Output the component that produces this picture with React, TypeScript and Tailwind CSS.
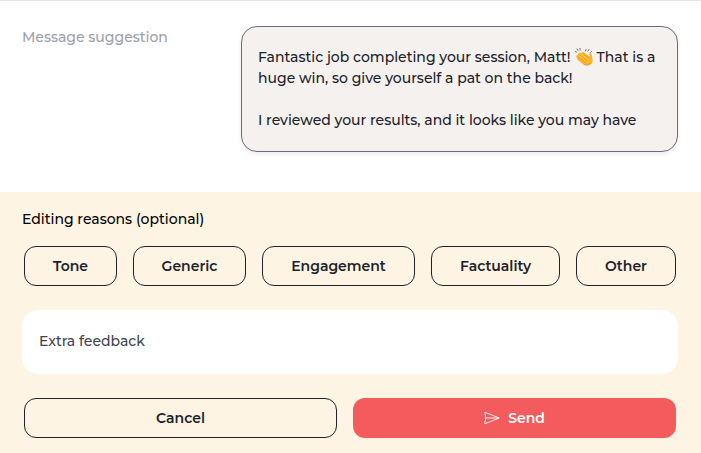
function ClappingHands() {
  return (
    <svg viewBox="0 0 36 36" className="mr-1 mb-[2px] ml-1 h-[18px] w-[18px] shrink-0" aria-label="clapping hands">
      <path d="M3 19 Q1 15 5 14 L6 14 Q5 10 9 10 L13 10 Q13 7 17 8 L29 17 L29 11 Q31 8 33 12 L35.500 25 Q35 32 29 34 Q22 37 16 32 L5 24 Q3 21 5 20 Z" fill="#fbb62c" />
      <path d="M10 14 L24 25 M6 18 L21 29 M17 12 L28 21 M18 33 Q25 36 31 31" stroke="#de8c22" strokeWidth="1.2" strokeLinecap="round" fill="none" />
      <path d="M12 12 L27 23 M8 15 L22 27" stroke="#ffd45c" strokeWidth="1.6" strokeLinecap="round" fill="none" />
      <path d="M1 7 L3 8 M4 2 L6 5 M10 1 L10 4 M22 3 L21 6 M28 3 L26 6 M33 7 L31 9" stroke="#6a6d72" strokeWidth="2" strokeLinecap="round" />
    </svg>
  );
}

function SendIcon() {
  return (
    <svg viewBox="0 0 16 14" className="h-[14px] w-4" fill="none" stroke="currentColor" strokeWidth="0.9" strokeLinejoin="round">
      <path d="M.8 1.2 15.2 7 .8 12.8 1.800 7Z M1.800 7H15" />
    </svg>
  );
}

const reasons = [
  { label: "Tone", box: "w-[93px]" },
  { label: "Generic", box: "w-[113px]" },
  { label: "Engagement", box: "w-[153px]" },
  { label: "Factuality", box: "w-[129px]" },
  { label: "Other", box: "w-[100px]" },
];

export default function App() {
  return (
    <main className="flex h-[453px] w-[701px] flex-col overflow-hidden bg-white font-[Montserrat,Inter,sans-serif] text-sm leading-[21px] font-medium text-[#20222b]">
      <section className="flex h-48 items-start justify-between border-t border-[#e1e4ef] pt-[25px] pr-[23px] pl-[22px]">
        <h2 className="pt-px font-medium text-[#9ca0ad]">Message suggestion</h2>
        <div className="h-[126px] w-[437px] rounded-2xl border border-[#6c6d7c] bg-[#f5f1ee] px-4 pt-5 whitespace-nowrap shadow-[0_2px_5px_rgba(0,0,0,0.08)]">
          <div className="flex h-[21px] items-center">
            <span>Fantastic job completing your session, Matt!</span>
            <ClappingHands />
            <span>That is a</span>
          </div>
          <div>huge win, so give yourself a pat on the back!</div>
          <div className="mt-[21px]">I reviewed your results, and it looks like you may have</div>
        </div>
      </section>
      <section className="flex h-[261px] flex-col bg-[#fdf4e3] px-[22px] pt-[17px]">
        <h3 className="font-medium text-black">Editing reasons (optional)</h3>
        <div className="mt-4 flex gap-4 pl-[2px]">
          {reasons.map((reason) => (
            <button key={reason.label} className={`h-10 shrink-0 rounded-xl border border-[#20222b] font-semibold ${reason.box}`}>
              {reason.label}
            </button>
          ))}
        </div>
        <div className="mt-6 flex h-16 w-[656px] items-center rounded-2xl bg-white px-[17px] pb-px text-[#414450]">Extra feedback</div>
        <div className="mt-6 flex gap-4 pl-[2px]">
          <button className="h-10 w-[313px] rounded-xl border border-[#20222b] font-semibold">Cancel</button>
          <button className="flex h-10 w-[323px] items-center justify-center gap-2 rounded-xl bg-[#f45b5c] font-semibold text-white">
            <SendIcon />
            <span>Send</span>
          </button>
        </div>
      </section>
    </main>
  );
}
